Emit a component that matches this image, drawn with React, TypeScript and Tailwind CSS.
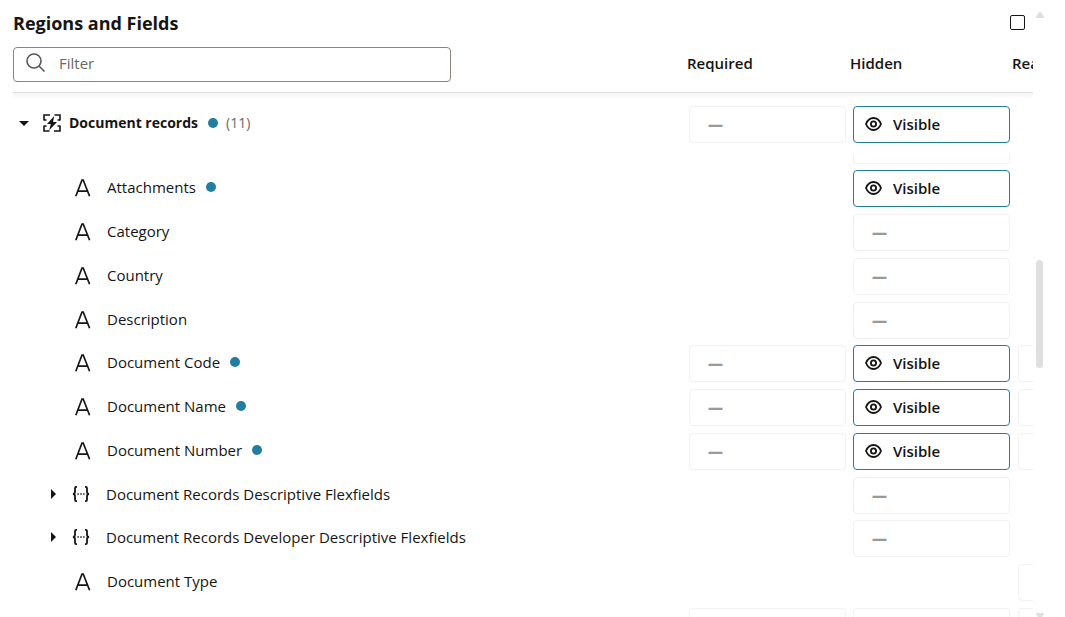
import React from "react";

type Cell = "visible" | "unset" | "none";

type Field = {
  name: string;
  kind: "text" | "flex";
  changed?: boolean;
  required: Cell;
  hidden: Cell;
  readOnly: Cell;
};

const fields: Field[] = [
  { name: "Attachments", kind: "text", changed: true, required: "none", hidden: "visible", readOnly: "none" },
  { name: "Category", kind: "text", required: "none", hidden: "unset", readOnly: "none" },
  { name: "Country", kind: "text", required: "none", hidden: "unset", readOnly: "none" },
  { name: "Description", kind: "text", required: "none", hidden: "unset", readOnly: "none" },
  { name: "Document Code", kind: "text", changed: true, required: "unset", hidden: "visible", readOnly: "unset" },
  { name: "Document Name", kind: "text", changed: true, required: "unset", hidden: "visible", readOnly: "unset" },
  { name: "Document Number", kind: "text", changed: true, required: "unset", hidden: "visible", readOnly: "unset" },
  { name: "Document Records Descriptive Flexfields", kind: "flex", required: "none", hidden: "unset", readOnly: "none" },
  { name: "Document Records Developer Descriptive Flexfields", kind: "flex", required: "none", hidden: "unset", readOnly: "none" },
  { name: "Document Type", kind: "text", required: "none", hidden: "none", readOnly: "unset" },
  { name: "", kind: "text", required: "unset", hidden: "unset", readOnly: "unset" },
];

function SearchIcon() {
  return (
    <svg width="20" height="20" viewBox="0 0 20 20" fill="none" stroke="#5b5855" strokeWidth="1.6" aria-hidden="true">
      <circle cx="8" cy="8" r="7" />
      <path d="M13 13 18.500 18.500" />
    </svg>
  );
}

function TextIcon() {
  return (
    <svg width="16" height="18" viewBox="0 0 16 18" fill="none" stroke="#161513" strokeWidth="1.7" aria-hidden="true">
      <path d="M0.800 17.300 7 1h1.200L14.600 17.300M3.200 12.200h9" />
    </svg>
  );
}

function FlexIcon() {
  return (
    <svg width="18" height="16" viewBox="0 0 18 16" fill="none" stroke="#161513" strokeWidth="1.8" aria-hidden="true">
      <path d="M5 .9H4.200Q3 .9 3 2.200v3.600Q3 8 .9 8 3 8 3 10.200v3.600q0 1.300 1.200 1.300H5" />
      <path d="M13 .9h.8Q15 .9 15 2.200v3.600Q15 8 17.100 8 15 8 15 10.200v3.600q0 1.300-1.200 1.300H13" />
      <path d="M5.400 8h1.400M8.300 8h1.400M11.200 8h1.400" strokeWidth="1.500" />
    </svg>
  );
}

function RegionIcon() {
  return (
    <svg width="18" height="18" viewBox="0 0 18 18" aria-hidden="true">
      <path
        d="M7 1H1v5.500M1 11.500V17h5.500M11.500 1H17v5.500M17 11.500V17h-6M1 6h2.500M1 12h2.500M14.500 6H17M14.500 12H17"
        fill="none"
        stroke="#161513"
        strokeWidth="1.6"
      />
      <path d="M11.200 2 4 10h3.800l-1.600 6.200L14 8H10Z" fill="#161513" />
    </svg>
  );
}

function EyeIcon() {
  return (
    <svg width="17" height="14" viewBox="0 0 17 14" fill="none" stroke="#161513" strokeWidth="1.8" aria-hidden="true">
      <path d="M1 7C2.600 3 5.300 1 8.500 1s5.900 2 7.500 6c-1.600 4-4.300 6-7.500 6S2.600 11 1 7Z" />
      <circle cx="8.500" cy="7" r="2.600" />
    </svg>
  );
}

function Caret({ open }: { open?: boolean }) {
  return open ? (
    <svg width="10" height="5" viewBox="0 0 10 5" aria-hidden="true">
      <path d="M0 0h10L5 5Z" fill="#161513" />
    </svg>
  ) : (
    <svg width="5" height="10" viewBox="0 0 5 10" aria-hidden="true">
      <path d="M0 0v10l5-5Z" fill="#161513" />
    </svg>
  );
}

function Dot() {
  return <span className="ml-2.5 size-2.5 shrink-0 rounded-full bg-[#227e9e]" />;
}

function Setting({ value, label }: { value: Cell; label: string }) {
  if (value === "none") return null;
  if (value === "visible") {
    return (
      <button
        type="button"
        aria-label={`${label}: Visible`}
        className="flex h-[37px] w-[157px] items-center gap-[11px] rounded-[4px] border border-[#227e9e] bg-white pl-[11px] font-semibold"
      >
        <EyeIcon />
        <span>Visible</span>
      </button>
    );
  }
  return (
    <button
      type="button"
      aria-label={`${label}: not set`}
      className="flex h-[37px] w-[157px] items-center rounded-[4px] border border-[#f1f1f1] bg-white pl-[18px] font-extrabold text-[#999]"
    >
      —
    </button>
  );
}

function FieldRow({ field }: { field: Field }) {
  return (
    <tr className="h-11 nth-[4n]:h-[43px]">
      <td className="p-0 align-top">
        <div className="flex h-10 items-center">
          {field.kind === "flex" ? (
            <>
              <button type="button" aria-label={`Expand ${field.name}`} className="ml-[38px] flex w-[21px]">
                <Caret />
              </button>
              <FlexIcon />
              <span className="ml-4">{field.name}</span>
            </>
          ) : (
            <>
              <span className="ml-[62px] pt-0.5">
                <TextIcon />
              </span>
              <span className="ml-4">{field.name}</span>
            </>
          )}
          {field.changed && <Dot />}
        </div>
      </td>
      <td className="p-0 pt-[3px] pl-0.5 align-top">
        <Setting value={field.required} label={`${field.name} required`} />
      </td>
      <td className="p-0 pt-[3px] pl-[3px] align-top">
        <Setting value={field.hidden} label={`${field.name} hidden`} />
      </td>
      <td className="p-0 pt-[3px] pl-1.5 align-top">
        <Setting value={field.readOnly} label={`${field.name} read-only`} />
      </td>
    </tr>
  );
}

export default function App() {
  return (
    <div className="flex h-screen overflow-hidden bg-white pl-[13px] font-['Open_Sans','Noto_Sans',sans-serif] text-[15px] leading-5 text-[#161513]">
      <main className="min-w-0 flex-1 overflow-hidden">
        <header className="mb-0.5 flex h-[45px] items-center justify-between pr-2">
          <h1 className="text-[18px] leading-6 font-bold">Regions and Fields</h1>
          <input
            type="checkbox"
            aria-label="Show modified only"
            className="size-[15px] appearance-none rounded-[2px] border border-[#161513] bg-white"
          />
        </header>

        <table className="w-[calc(100%+142px)] table-fixed border-collapse text-left">
          <colgroup>
            <col />
            <col className="w-[163px]" />
            <col className="w-[162px]" />
            <col className="w-[163px]" />
          </colgroup>
          <thead>
            <tr className="h-[45px] border-b border-[#dedede]">
              <th className="p-0 align-top font-normal">
                <label className="flex h-[35px] w-[438px] items-start gap-[13px] rounded-[4px] border border-[#8b8580] px-3 pt-[5px]">
                  <SearchIcon />
                  <input
                    type="text"
                    aria-label="Filter"
                    placeholder="Filter"
                    className="min-w-0 flex-1 bg-transparent outline-none placeholder:text-[#6b6864]"
                  />
                </label>
              </th>
              <th className="p-0 pt-1.5 align-top font-semibold">Required</th>
              <th className="p-0 pt-1.5 align-top font-semibold">Hidden</th>
              <th className="p-0 pt-1.5 align-top font-semibold">Read-Only</th>
            </tr>
          </thead>
          <tbody>
            <tr className="h-[61px] bg-linear-to-b from-[#f3f3f3] to-white to-10%">
              <td className="p-0 align-top">
                <div className="flex h-[61px] items-center pl-1.5">
                  <button type="button" aria-label="Collapse Document records" className="flex w-6">
                    <Caret open />
                  </button>
                  <RegionIcon />
                  <span className="ml-2 text-[14px] font-bold">Document records</span>
                  <Dot />
                  <span className="ml-2 text-[14px] text-[#6b6864]">(11)</span>
                </div>
              </td>
              <td className="p-0 pt-[13px] pl-0.5 align-top">
                <Setting value="unset" label="Document records required" />
              </td>
              <td className="p-0 pt-[13px] pl-[3px] align-top">
                <Setting value="visible" label="Document records hidden" />
              </td>
              <td className="p-0" />
            </tr>
            <tr className="h-[13px]">
              <td className="p-0" />
              <td className="p-0" />
              <td className="p-0 pl-[3px] align-top">
                <div className="h-2.5 w-[157px] rounded-b-[4px] border-x border-b border-[#f1f1f1]" />
              </td>
              <td className="p-0" />
            </tr>
          </tbody>
          <tbody>
            {fields.map((field, i) => (
              <FieldRow key={i} field={field} />
            ))}
          </tbody>
        </table>
      </main>

      <div className="mr-[21px] ml-0.5 flex w-[9px] shrink-0 flex-col items-center pt-3" aria-hidden="true">
        <svg width="8" height="6" viewBox="0 0 8 6">
          <path d="M0 6V5L3 0h2l3 5v1Z" fill="#dfdfde" />
        </svg>
        <div className="grow-[242]" />
        <div className="h-[108px] w-[7px] rounded-full bg-[#dfdfde]" />
        <div className="grow-[245]" />
        <svg width="8" height="4" viewBox="0 0 8 4">
          <path d="M0 0h8v1L6 4H2L0 1Z" fill="#dfdfde" />
        </svg>
      </div>
    </div>
  );
}
